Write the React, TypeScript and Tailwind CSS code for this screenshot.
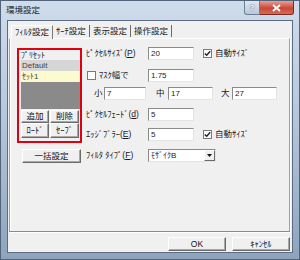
import React from "react";

const Input = ({ w, v }: { w: string; v: string }) => (
  <div
    className={`${w} h-[13px] bg-white border border-t-[#8a8a8a] border-l-[#8a8a8a] border-r-[#e4e4e4] border-b-[#e4e4e4] pl-[2px] text-[8px] leading-[11px] text-[#222]`}
  >
    {v}
  </div>
);

const Check = ({ checked }: { checked: boolean }) => (
  <div className="w-[9px] h-[9px] bg-white border border-[#7a7a7a] flex items-center justify-center">
    {checked && (
      <svg width="7" height="7" viewBox="0 0 7 7">
        <path d="M0.8 3.4 L2.7 5.3 L6.2 1.2" stroke="#222" strokeWidth="1.4" fill="none" />
      </svg>
    )}
  </div>
);

const Btn = ({ cls, label }: { cls: string; label: string }) => (
  <div
    className={`${cls} bg-[#f0f0f0] border border-t-white border-l-white border-r-[#6b6b6b] border-b-[#6b6b6b] shadow-[inset_-1px_-1px_0_#a8a8a8] flex items-center justify-center text-[8.5px] leading-none text-[#111]`}
  >
    {label}
  </div>
);

export default function App() {
  return (
    <div className="w-[300px] h-[260px] font-['Liberation_Sans','Noto_Sans_CJK_JP',sans-serif] bg-[linear-gradient(180deg,#cfdceb_0%,#b9cadd_40%,#8ea4bd_100%)] border border-[#52647a] flex flex-col overflow-hidden">
      {/* title bar */}
      <div className="h-[19px] flex items-start justify-between">
        <div className="pl-[5px] pt-[4px] text-[8.5px] leading-[10px] text-[#1b1b1b]">環境設定</div>
        <div className="flex mr-[5px]">
          <div className="w-[16px] h-[14px] rounded-bl-[3px] border border-[#6d7f96] border-t-0 bg-[linear-gradient(180deg,#dfe8f1,#b7c8da)] flex items-center justify-center text-[8px] font-bold text-white leading-none [text-shadow:0_0_2px_#334]">
            ?
          </div>
          <div className="w-[34px] h-[14px] rounded-br-[3px] border border-[#7a2a25] border-t-0 border-l-0 bg-[linear-gradient(180deg,#e8a093,#c9473a_55%,#d86a55)] flex items-center justify-center">
            <svg width="9" height="8" viewBox="0 0 9 8">
              <path d="M1 1 L8 7 M8 1 L1 7" stroke="white" strokeWidth="2" />
            </svg>
          </div>
        </div>
      </div>
      {/* client area */}
      <div className="ml-[6px] mr-[6px] mb-[6px] flex-1 bg-[#f0f0f0] border border-[#5b6d84] flex flex-col text-[#1a1a1a]">
        {/* tabs */}
        <div className="h-[17px] flex items-end pl-[3px] pt-[3px]">
          <div className="h-[14px] w-[42px] border border-b-0 border-t-white border-l-white border-r-[#7a7a7a] bg-[#f0f0f0] flex items-center justify-center text-[8.5px] leading-none relative top-[1px]">
            ﾌｨﾙﾀ設定
          </div>
          <div className="h-[12px] w-[37px] border-r border-[#6b6b6b] flex items-center justify-center text-[8.5px] leading-none mb-[1px]">
            ｻｰﾁ設定
          </div>
          <div className="h-[12px] w-[41px] border-r border-[#6b6b6b] flex items-center justify-center text-[8.5px] leading-none mb-[1px]">
            表示設定
          </div>
          <div className="h-[12px] w-[41px] border-r border-[#6b6b6b] flex items-center justify-center text-[8.5px] leading-none mb-[1px]">
            操作設定
          </div>
        </div>
        {/* panel */}
        <div className="ml-[1px] w-[281px] h-[194px] border border-t-white border-l-[#a0a0a0] border-r-[#a0a0a0] border-b-[#8a8a8a] shadow-[1px_1px_0_#ffffff,inset_1px_0_0_#ffffff] flex flex-col pl-[7px] pt-[9px]">
          <div className="flex">
            {/* preset group */}
            <div className="w-[65px] h-[95px] border-2 border-[#e1000f] flex flex-col pl-[2px] pt-[1px]">
              <div className="h-[9px] text-[8px] leading-[9px]">ﾌﾟﾘｾｯﾄ</div>
              <div className="w-[59px] h-[49px] bg-[#8a8a8a] flex flex-col">
                <div className="h-[11px] bg-[#d6d6d6] text-[8px] leading-[11px] pl-[1px] text-[#444]">Default</div>
                <div className="h-[11px] bg-[#fbfbcf] text-[8px] leading-[11px] pl-[1px] text-[#444]">ｾｯﾄ1</div>
              </div>
              <div className="flex mt-[1px]">
                <Btn cls="w-[28px] h-[13px]" label="追加" />
                <Btn cls="w-[29px] h-[13px] ml-[1px]" label="削除" />
              </div>
              <div className="flex">
                <Btn cls="w-[28px] h-[15px]" label="ﾛｰﾄﾞ" />
                <Btn cls="w-[29px] h-[15px] ml-[1px]" label="ｾｰﾌﾞ" />
              </div>
            </div>
            {/* right fields */}
            <div className="ml-[4px] -mt-[1px] flex flex-col text-[8.5px] leading-none">
              <div className="h-[13px] flex items-center">
                <div className="w-[62px]">ﾋﾟｸｾﾙｻｲｽﾞ(<span className="underline">P</span>)</div>
                <Input w="w-[46px]" v="20" />
                <div className="ml-[9px]"><Check checked /></div>
                <div className="ml-[3px]">自動ｻｲｽﾞ</div>
              </div>
              <div className="h-[12px] mt-[9px] flex items-center">
                <div className="w-[62px] flex items-center pl-[1px]">
                  <Check checked={false} />
                  <span className="ml-[3px]">ﾏｽｸ幅で</span>
                </div>
                <Input w="w-[46px] h-[12px]" v="1.75" />
              </div>
              <div className="h-[13px] mt-[6px] flex items-center">
                <span className="ml-[8px] w-[10px]">小</span>
                <Input w="w-[42px]" v="7" />
                <span className="ml-[10px] w-[12px]">中</span>
                <Input w="w-[45px]" v="17" />
                <span className="ml-[8px] w-[11px]">大</span>
                <Input w="w-[45px]" v="27" />
              </div>
              <div className="h-[13px] mt-[8px] flex items-center">
                <div className="w-[62px]">ﾋﾟｸｾﾙﾌｪｰﾄﾞ(<span className="underline">d</span>)</div>
                <Input w="w-[46px]" v="5" />
              </div>
              <div className="h-[13px] mt-[7px] flex items-center">
                <div className="w-[62px]">ｴｯｼﾞﾌﾞﾗｰ(<span className="underline">E</span>)</div>
                <Input w="w-[46px]" v="5" />
                <div className="ml-[9px]"><Check checked /></div>
                <div className="ml-[3px]">自動ｻｲｽﾞ</div>
              </div>
            </div>
          </div>
          {/* bottom row */}
          <div className="mt-[6px] flex items-start">
            <Btn cls="ml-[5px] w-[59px] h-[14px]" label="一括設定" />
            <div className="ml-[5px] w-[62px] h-[13px] flex items-center text-[8.5px] leading-none">
              ﾌｨﾙﾀ ﾀｲﾌﾟ(<span className="underline">F</span>)
            </div>
            <div className="w-[68px] h-[13px] bg-white border border-t-[#8a8a8a] border-l-[#8a8a8a] border-r-[#e4e4e4] border-b-[#e4e4e4] flex">
              <div className="flex-1 pl-[2px] text-[8px] leading-[11px]">ﾓｻﾞｲｸB</div>
              <div className="w-[11px] h-[11px] bg-[#f0f0f0] border border-t-white border-l-white border-r-[#6b6b6b] border-b-[#6b6b6b] flex items-center justify-center">
                <svg width="5" height="3" viewBox="0 0 5 3">
                  <path d="M0 0 H5 L2.5 3 Z" fill="#111" />
                </svg>
              </div>
            </div>
          </div>
        </div>
        {/* dialog buttons */}
        <div className="flex justify-end pr-[2px] mt-[5px]">
          <Btn cls="w-[58px] h-[14px]" label="OK" />
          <Btn cls="w-[58px] h-[14px] ml-[6px]" label="ｷｬﾝｾﾙ" />
        </div>
      </div>
    </div>
  );
}
